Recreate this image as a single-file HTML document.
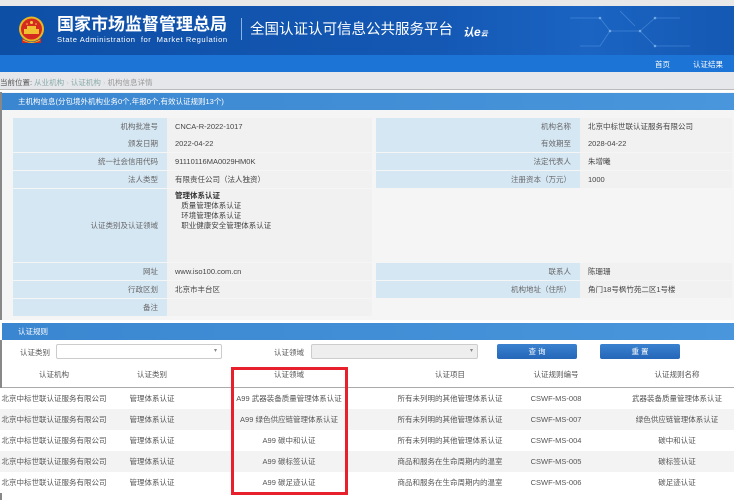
<!DOCTYPE html>
<html><head><meta charset="utf-8"><style>
*{margin:0;padding:0;box-sizing:border-box}
body{width:734px;height:500px;overflow:hidden;background:#fff;font-family:"Liberation Sans","Noto Sans CJK SC",sans-serif;position:relative;color:#555;font-size:7.5px}
.a{position:absolute}
.hdr{left:0;top:6px;width:734px;height:49px;background:linear-gradient(90deg,#0e4fa6,#1458b4 60%,#1b64c2 80%,#1459b3)}
.nav{left:0;top:55px;width:734px;height:17px;background:#1c74d6}
.bc{left:0;top:72px;width:734px;height:18px;background:#e6e7ea;border-bottom:1px solid #bbb}
.sec{background:linear-gradient(90deg,#3a86d0,#4a96dc);color:#fff;height:17px;line-height:17px;padding-left:16px;font-size:7.5px}
.lb{background:#d6e7f4;text-align:right;padding-right:9px;color:#666}
.vl{background:#f1f1f1;padding-left:8px;color:#444}
.row{position:absolute;height:17px;line-height:17px}
.th{position:absolute;top:362px;height:25px;line-height:25px;font-size:7.5px;color:#555;text-align:center}
.tr{position:absolute;left:0;width:734px;height:21px}
.td{position:absolute;text-align:center;line-height:21px;color:#555;font-size:7.5px;white-space:nowrap}
.btn{background:linear-gradient(#3a82d0,#2566b8);color:#fff;text-align:center;line-height:15px;border-radius:2px;height:15px;top:344px}
</style></head><body>
<div class="a" style="left:0;top:0;width:734px;height:6px;background:#e8e8e8"></div>
<div class="a hdr"></div>
<svg class="a" style="left:560px;top:6px" width="174" height="49"><g stroke="#5a9be6" stroke-width="0.8" fill="none" opacity="0.6"><path d="M10 12 L40 12 L50 25 L40 40 L20 40 M50 25 L80 25 L95 12 L120 12 M80 25 L95 40 L130 40 M60 5 L75 20"/></g><g fill="#8cc0f5" opacity="0.7"><circle cx="40" cy="12" r="1.3"/><circle cx="50" cy="25" r="1.3"/><circle cx="80" cy="25" r="1.3"/><circle cx="95" cy="12" r="1.3"/><circle cx="95" cy="40" r="1.3"/></g></svg>
<svg class="a" style="left:17px;top:16px" width="29" height="30"><circle cx="14.5" cy="13" r="12.5" fill="#e8b820"/><circle cx="14.5" cy="13" r="10.5" fill="#d42a20"/><rect x="7" y="13" width="15" height="5" fill="#f0c030"/><rect x="10" y="10" width="9" height="3" fill="#f0c030"/><circle cx="14.5" cy="6.5" r="1.5" fill="#f5d040"/><circle cx="10" cy="8" r=".8" fill="#f5d040"/><circle cx="19" cy="8" r=".8" fill="#f5d040"/><path d="M5 22 Q14.5 30 24 22 L24 27 L5 27Z" fill="#d42a20"/><path d="M6 24 Q14.5 29 23 24" stroke="#e8b820" fill="none"/></svg>
<div class="a" style="left:57px;top:15px;font-size:17px;font-weight:bold;color:#fff;line-height:20px;white-space:nowrap">国家市场监督管理总局</div>
<div class="a" style="left:57px;top:35px;font-size:7.6px;color:#fff;letter-spacing:.55px;line-height:10px;white-space:nowrap">State Administration&nbsp; for&nbsp; Market Regulation</div>
<div class="a" style="left:241px;top:18px;width:1px;height:22px;background:#8ab4e6"></div>
<div class="a" style="left:250px;top:21px;font-size:14.5px;color:#fff;line-height:18px;white-space:nowrap">全国认证认可信息公共服务平台</div>
<div class="a" style="left:463px;top:24px;font-size:11px;color:#fff;font-style:italic;font-weight:bold;line-height:16px;white-space:nowrap">认<span style="font-size:12px">e</span><span style="font-size:7px">云</span></div>
<div class="a nav"></div>
<div class="a" style="left:655px;top:59px;color:#fff;font-size:7.5px">首页</div>
<div class="a" style="left:693px;top:59px;color:#fff;font-size:7.5px">认证结果</div>
<div class="a bc"></div>
<div class="a" style="left:0;top:77px;color:#555;font-size:7.5px;white-space:nowrap">当前位置: <span style="color:#8aa">从业机构</span> <span style="color:#ccc">›</span> <span style="color:#8aa">认证机构</span> <span style="color:#ccc">›</span> <span style="color:#999">机构信息详情</span></div>
<div class="a" style="left:0;top:92px;width:734px;height:228px;background:#f5f5f5;border-left:2px solid #888"></div>
<div class="a sec" style="left:2px;top:93px;width:732px">主机构信息(分包境外机构业务0个,年报0个,有效认证规则13个)</div>
<div class="row lb" style="left:13px;top:118px;width:154px">机构批准号</div><div class="row vl" style="left:167px;top:118px;width:205px">CNCA-R-2022-1017</div>
<div class="row lb" style="left:13px;top:135px;width:154px">颁发日期</div><div class="row vl" style="left:167px;top:135px;width:205px">2022-04-22</div>
<div class="row lb" style="left:13px;top:153px;width:154px">统一社会信用代码</div><div class="row vl" style="left:167px;top:153px;width:205px">91110116MA0029HM0K</div>
<div class="row lb" style="left:13px;top:171px;width:154px">法人类型</div><div class="row vl" style="left:167px;top:171px;width:205px">有限责任公司（法人独资）</div>
<div class="a lb" style="left:13px;top:189px;width:154px;height:73px;line-height:73px">认证类别及认证领域</div>
<div class="a vl" style="left:167px;top:189px;width:205px;height:73px;line-height:10px;padding-top:2px"><b style="color:#333">管理体系认证</b><br>&nbsp;&nbsp;&nbsp;质量管理体系认证<br>&nbsp;&nbsp;&nbsp;环境管理体系认证<br>&nbsp;&nbsp;&nbsp;职业健康安全管理体系认证</div>
<div class="row lb" style="left:13px;top:263px;width:154px">网址</div><div class="row vl" style="left:167px;top:263px;width:205px">www.iso100.com.cn</div>
<div class="row lb" style="left:13px;top:281px;width:154px">行政区划</div><div class="row vl" style="left:167px;top:281px;width:205px">北京市丰台区</div>
<div class="row lb" style="left:13px;top:299px;width:154px">备注</div><div class="row vl" style="left:167px;top:299px;width:205px"></div>
<div class="row lb" style="left:376px;top:118px;width:204px">机构名称</div><div class="row vl" style="left:580px;top:118px;width:152px">北京中标世联认证服务有限公司</div>
<div class="row lb" style="left:376px;top:135px;width:204px">有效期至</div><div class="row vl" style="left:580px;top:135px;width:152px">2028-04-22</div>
<div class="row lb" style="left:376px;top:153px;width:204px">法定代表人</div><div class="row vl" style="left:580px;top:153px;width:152px">朱增曦</div>
<div class="row lb" style="left:376px;top:171px;width:204px">注册资本（万元）</div><div class="row vl" style="left:580px;top:171px;width:152px">1000</div>
<div class="row lb" style="left:376px;top:263px;width:204px">联系人</div><div class="row vl" style="left:580px;top:263px;width:152px">陈珊珊</div>
<div class="row lb" style="left:376px;top:281px;width:204px">机构地址（住所）</div><div class="row vl" style="left:580px;top:281px;width:152px">角门18号枫竹苑二区1号楼</div>
<div class="a sec" style="left:2px;top:323px;width:732px">认证规则</div>
<div class="a" style="left:0;top:340px;width:2px;height:160px;background:#888"></div>
<div class="a" style="left:20px;top:347px">认证类别</div>
<div class="a" style="left:56px;top:344px;width:166px;height:15px;border:1px solid #ccc;background:#fff;border-radius:2px"><span style="position:absolute;right:4px;top:2px;font-size:6px;color:#888">▾</span></div>
<div class="a" style="left:274px;top:347px">认证领域</div>
<div class="a" style="left:311px;top:344px;width:167px;height:15px;border:1px solid #ccc;background:#eee;border-radius:2px"><span style="position:absolute;right:4px;top:2px;font-size:6px;color:#888">▾</span></div>
<div class="a btn" style="left:497px;width:80px">查 询</div>
<div class="a btn" style="left:600px;width:80px">重 置</div>
<div class="th" style="left:0;width:108px">认证机构</div>
<div class="th" style="left:108px;width:88px">认证类别</div>
<div class="th" style="left:231px;width:116px">认证领域</div>
<div class="th" style="left:380px;width:140px">认证项目</div>
<div class="th" style="left:510px;width:92px">认证规则编号</div>
<div class="th" style="left:620px;width:114px">认证规则名称</div>
<div class="a" style="left:2px;top:387px;width:732px;height:1px;background:#aaa"></div>
<div class="tr" style="top:388px;background:#fff"></div>
<div class="tr" style="top:409px;background:#f3f3f3"></div>
<div class="tr" style="top:430px;background:#fff"></div>
<div class="tr" style="top:451px;background:#f3f3f3"></div>
<div class="tr" style="top:472px;background:#fff"></div>
<div class="td" style="left:0;width:108px;top:388px">北京中标世联认证服务有限公司</div><div class="td" style="left:108px;width:88px;top:388px">管理体系认证</div><div class="td" style="left:231px;width:116px;top:388px">A99 武器装备质量管理体系认证</div><div class="td" style="left:380px;width:140px;top:388px">所有未列明的其他管理体系认证</div><div class="td" style="left:510px;width:92px;top:388px">CSWF-MS-008</div><div class="td" style="left:620px;width:114px;top:388px">武器装备质量管理体系认证</div>
<div class="td" style="left:0;width:108px;top:409px">北京中标世联认证服务有限公司</div><div class="td" style="left:108px;width:88px;top:409px">管理体系认证</div><div class="td" style="left:231px;width:116px;top:409px">A99 绿色供应链管理体系认证</div><div class="td" style="left:380px;width:140px;top:409px">所有未列明的其他管理体系认证</div><div class="td" style="left:510px;width:92px;top:409px">CSWF-MS-007</div><div class="td" style="left:620px;width:114px;top:409px">绿色供应链管理体系认证</div>
<div class="td" style="left:0;width:108px;top:430px">北京中标世联认证服务有限公司</div><div class="td" style="left:108px;width:88px;top:430px">管理体系认证</div><div class="td" style="left:231px;width:116px;top:430px">A99 碳中和认证</div><div class="td" style="left:380px;width:140px;top:430px">所有未列明的其他管理体系认证</div><div class="td" style="left:510px;width:92px;top:430px">CSWF-MS-004</div><div class="td" style="left:620px;width:114px;top:430px">碳中和认证</div>
<div class="td" style="left:0;width:108px;top:451px">北京中标世联认证服务有限公司</div><div class="td" style="left:108px;width:88px;top:451px">管理体系认证</div><div class="td" style="left:231px;width:116px;top:451px">A99 碳标签认证</div><div class="td" style="left:380px;width:140px;top:451px">商品和服务在生命周期内的温室</div><div class="td" style="left:510px;width:92px;top:451px">CSWF-MS-005</div><div class="td" style="left:620px;width:114px;top:451px">碳标签认证</div>
<div class="td" style="left:0;width:108px;top:472px">北京中标世联认证服务有限公司</div><div class="td" style="left:108px;width:88px;top:472px">管理体系认证</div><div class="td" style="left:231px;width:116px;top:472px">A99 碳足迹认证</div><div class="td" style="left:380px;width:140px;top:472px">商品和服务在生命周期内的温室</div><div class="td" style="left:510px;width:92px;top:472px">CSWF-MS-006</div><div class="td" style="left:620px;width:114px;top:472px">碳足迹认证</div>
<div class="a" style="left:231px;top:367px;width:117px;height:128px;border:3px solid #e8202c"></div>
</body></html>
